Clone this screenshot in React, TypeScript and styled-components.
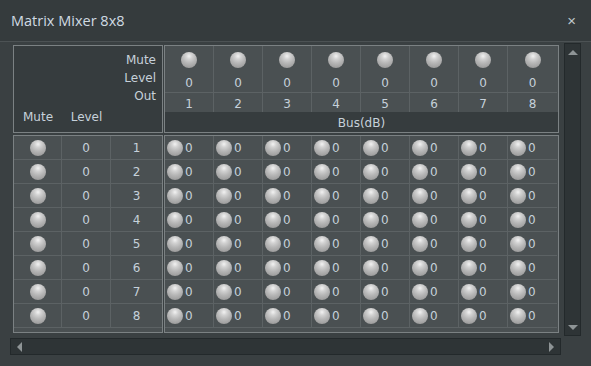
import styled, { createGlobalStyle } from 'styled-components';

const outs = [1, 2, 3, 4, 5, 6, 7, 8];
const rows = [1, 2, 3, 4, 5, 6, 7, 8];

const GlobalStyle = createGlobalStyle`
  html, body {
    margin: 0;
    padding: 0;
    background: #3a4042;
  }
  * {
    box-sizing: border-box;
  }
`;

export default function App() {
  return (
    <>
      <GlobalStyle />
      <Window>
        <TitleBar>
          <Title>Matrix Mixer 8x8</Title>
          <Close>×</Close>
        </TitleBar>
        <Body>
          <Content>
            <Corner>
              <CornerRight>
                <span>Mute</span>
                <span>Level</span>
                <span>Out</span>
              </CornerRight>
              <CornerBottom>
                <span>Mute</span>
                <span>Level</span>
              </CornerBottom>
            </Corner>

            <Header>
              <HeaderGrid>
                {outs.map((o) => (
                  <HeadCell key={'m' + o} $row="mute">
                    <Ball />
                  </HeadCell>
                ))}
                {outs.map((o) => (
                  <HeadCell key={'l' + o} $row="level">0</HeadCell>
                ))}
                {outs.map((o) => (
                  <HeadCell key={'o' + o} $row="out">{o}</HeadCell>
                ))}
              </HeaderGrid>
              <BusBar>Bus(dB)</BusBar>
            </Header>

            <InputPanel>
              <InputGrid>
                {rows.map((r) => (
                  <InputRow key={r}>
                    <InputCell><Ball /></InputCell>
                    <InputCell>0</InputCell>
                    <InputCell $last>{r}</InputCell>
                  </InputRow>
                ))}
              </InputGrid>
            </InputPanel>

            <MatrixPanel>
              <MatrixGrid>
                {rows.map((r) =>
                  outs.map((o) => (
                    <MatrixCell key={r + '-' + o} $lastCol={o === 8}>
                      <Ball />
                      <Val>0</Val>
                    </MatrixCell>
                  ))
                )}
              </MatrixGrid>
            </MatrixPanel>
          </Content>

          <VScroll>
            <ArrowUp />
            <ArrowDown />
          </VScroll>
          <HScroll>
            <ArrowLeft />
            <ArrowRight />
          </HScroll>
        </Body>
      </Window>
    </>
  );
}

const Window = styled.div`
  width: 591px;
  height: 366px;
  background: #3a4042;
  display: flex;
  flex-direction: column;
  font-family: "DejaVu Sans", "Liberation Sans", sans-serif;
  color: #c6d1da;
  overflow: hidden;
`;

const TitleBar = styled.div`
  height: 42px;
  flex: none;
  display: flex;
  align-items: center;
  justify-content: space-between;
  padding: 0 15px 0 11px;
  background: #353b3d;
  border-bottom: 1px solid #4c5254;
`;

const Title = styled.div`
  font-family: "Open Sans", "DejaVu Sans", sans-serif;
  font-size: 14.5px;
  color: #d0dae2;
  margin-top: -1px;
`;

const Close = styled.div`
  font-family: "Liberation Sans", sans-serif;
  font-size: 15px;
  color: #c0c8cc;
  line-height: 1;
  margin-top: -1px;
`;

const Body = styled.div`
  flex: 1;
  display: grid;
  grid-template-columns: 551px 17px;
  grid-template-rows: 293px 17px;
  column-gap: 3px;
  row-gap: 2px;
  padding: 1px 0 0 10px;
`;

const Content = styled.div`
  display: grid;
  grid-template-columns: 150px 395px;
  grid-template-rows: 88px 198px;
  column-gap: 1px;
  row-gap: 2px;
  padding: 2px 0 0 3px;
  font-size: 12px;
`;

const Panel = styled.div`
  border: 1px solid #7b8183;
`;

const Corner = styled(Panel)`
  background: #363c3e;
  display: flex;
  flex-direction: column;
  justify-content: space-between;
  padding: 6px 6px 6px 0;
`;

const CornerRight = styled.div`
  display: flex;
  flex-direction: column;
  align-items: flex-end;
  line-height: 18px;
  margin-top: -1px;
`;

const CornerBottom = styled.div`
  display: grid;
  grid-template-columns: 48px 49px;
  justify-items: center;
  line-height: 16px;
  margin-bottom: 1px;
`;

const Header = styled(Panel)`
  display: flex;
  flex-direction: column;
  background: #4a5052;
`;

const HeaderGrid = styled.div`
  display: grid;
  grid-template-columns: repeat(8, 49px);
  grid-template-rows: 27px 20px 19px;
`;

const HeadCell = styled.div<{ $row: 'mute' | 'level' | 'out' }>`
  display: flex;
  align-items: center;
  justify-content: center;
  border-right: 1px solid #5c6264;
  border-bottom: ${({ $row }) => ($row === 'level' ? '1px solid #5c6264' : 'none')};
  padding-top: ${({ $row }) => ($row === 'mute' ? '1px' : $row === 'out' ? '3px' : '0')};
  &:nth-child(8n) {
    border-right: none;
  }
`;

const BusBar = styled.div`
  flex: 1;
  background: #363c3e;
  display: flex;
  align-items: center;
  justify-content: center;
  font-size: 12px;
  padding-top: 1px;
`;

const InputPanel = styled(Panel)`
  background: #4a5052;
`;

const InputGrid = styled.div`
  display: flex;
  flex-direction: column;
`;

const InputRow = styled.div`
  display: grid;
  grid-template-columns: 48px 49px 1fr;
  height: 24px;
  border-bottom: 1px solid #5c6264;
`;

const InputCell = styled.div<{ $last?: boolean }>`
  display: flex;
  align-items: center;
  justify-content: center;
  border-right: ${({ $last }) => ($last ? 'none' : '1px solid #5c6264')};
`;

const MatrixPanel = styled(Panel)`
  background: #4a5052;
`;

const MatrixGrid = styled.div`
  display: grid;
  grid-template-columns: repeat(8, 49px);
  grid-auto-rows: 24px;
`;

const MatrixCell = styled.div<{ $lastCol?: boolean }>`
  display: flex;
  align-items: center;
  gap: 2px;
  padding-left: 2px;
  border-right: ${({ $lastCol }) => ($lastCol ? 'none' : '1px solid #5c6264')};
  border-bottom: 1px solid #5c6264;
`;

const Val = styled.span`
  font-size: 12px;
`;

const Ball = styled.span`
  display: inline-block;
  width: 16px;
  height: 16px;
  border-radius: 50%;
  background: radial-gradient(
    circle at 50% 26%,
    #f2f2f2 0%,
    #d2d2d2 22%,
    #b6b6b6 50%,
    #a0a0a0 78%,
    #848484 100%
  );
  flex: none;
`;

const Track = styled.div`
  background: #2e3436;
  border: 1px solid #23292b;
  display: flex;
  justify-content: space-between;
`;

const VScroll = styled(Track)`
  flex-direction: column;
  align-items: center;
  padding: 6px 0 5px;
`;

const HScroll = styled(Track)`
  align-items: center;
  padding: 0 6px;
`;

const ArrowUp = styled.div`
  width: 0;
  height: 0;
  border-left: 5px solid transparent;
  border-right: 5px solid transparent;
  border-bottom: 5px solid #8e9496;
`;

const ArrowDown = styled.div`
  width: 0;
  height: 0;
  border-left: 5px solid transparent;
  border-right: 5px solid transparent;
  border-top: 5px solid #8e9496;
`;

const ArrowLeft = styled.div`
  width: 0;
  height: 0;
  border-top: 5px solid transparent;
  border-bottom: 5px solid transparent;
  border-right: 5px solid #8e9496;
`;

const ArrowRight = styled.div`
  width: 0;
  height: 0;
  border-top: 5px solid transparent;
  border-bottom: 5px solid transparent;
  border-left: 5px solid #8e9496;
`;
